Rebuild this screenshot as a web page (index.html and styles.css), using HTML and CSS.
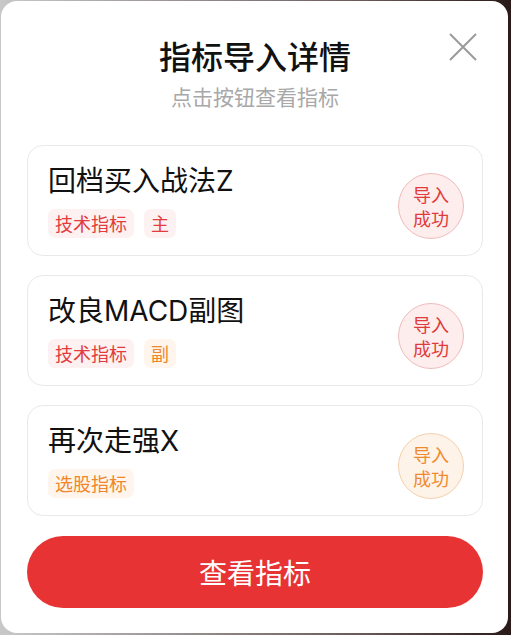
FILE: index.html
```html
<!DOCTYPE html>
<html lang="zh-CN">
<head>
  <meta charset="utf-8">
  <title>指标导入详情</title>
  <link rel="stylesheet" href="styles.css">
</head>
<body>
<div class="modal">
  <div class="close">
    <svg width="28" height="28" viewBox="0 0 28 28">
      <path d="M1 1L27 27M27 1L1 27" stroke="#9a9a9a" stroke-width="2" fill="none"/>
    </svg>
  </div>

  <div class="head">
    <h1 class="title">指标导入详情</h1>
    <p class="sub">点击按钮查看指标</p>
  </div>

  <div class="list">
    <div class="card">
      <div class="info">
        <div class="name">回档买入战法Z</div>
        <div class="tags">
          <span class="tag red">技术指标</span>
          <span class="tag red">主</span>
        </div>
      </div>
      <div class="badge red">导入<br>成功</div>
    </div>

    <div class="card">
      <div class="info">
        <div class="name">改良MACD副图</div>
        <div class="tags">
          <span class="tag red">技术指标</span>
          <span class="tag orange">副</span>
        </div>
      </div>
      <div class="badge red">导入<br>成功</div>
    </div>

    <div class="card">
      <div class="info">
        <div class="name">再次走强X</div>
        <div class="tags">
          <span class="tag orange">选股指标</span>
        </div>
      </div>
      <div class="badge orange">导入<br>成功</div>
    </div>
  </div>

  <div class="btn">查看指标</div>
</div>
</body>
</html>
```

FILE: styles.css
```css
html, body {
    margin: 0;
    height: 100%;
}

body {
    background: linear-gradient(to right, #c8c8c8, #6a5a5a 70%, #2a1a1a);
    padding: 1px 3px 2px 1px;
    box-sizing: border-box;
    font-family: "Noto Sans CJK SC", "Noto Sans", sans-serif;
    color: #111111;
}

.modal {
    position: relative;
    height: 632px;
    background: #ffffff;
    border-radius: 16px;
    padding: 34px 25px 0 26px;
    box-sizing: border-box;
}

.close {
    position: absolute;
    top: 32px;
    right: 31px;
    width: 28px;
    height: 28px;
}

.close svg {
    display: block;
}

.head {
    text-align: center;
}

.title {
    margin: 0;
    font-size: 32px;
    line-height: 40px;
    font-weight: 500;
    color: #111111;
}

.sub {
    margin: 6px 0 0;
    font-size: 21px;
    line-height: 30px;
    color: #a8a8a8;
}

.list {
    margin-top: 34px;
    display: flex;
    flex-direction: column;
    gap: 19px;
}

.card {
    height: 111px;
    box-sizing: border-box;
    border: 1px solid #e9e9e9;
    border-radius: 16px;
    padding: 17px 18px 0 20px;
    display: flex;
    justify-content: space-between;
}

.name {
    font-family: Inter, "Noto Sans CJK SC", sans-serif;
    font-size: 28px;
    line-height: 37px;
    color: #111111;
}

.tags {
    margin-top: 9px;
    display: flex;
    gap: 10px;
}

.tag {
    height: 29px;
    line-height: 29px;
    padding: 0 7px;
    border-radius: 7px;
    font-size: 18px;
}

.tag.red {
    background: #fdf1f1;
    color: #e23c3c;
}

.tag.orange {
    background: #fff5ec;
    color: #f0862a;
}

.badge {
    width: 66px;
    height: 66px;
    box-sizing: border-box;
    margin-top: 10px;
    border-radius: 50%;
    display: flex;
    align-items: center;
    justify-content: center;
    text-align: center;
    font-size: 18px;
    line-height: 24px;
}

.badge.red {
    background: #fdeded;
    border: 1px solid #efbcbc;
    color: #e03a3a;
}

.badge.orange {
    background: #fef3e9;
    border: 1px solid #f5d0ab;
    color: #f08a2e;
}

.btn {
    margin-top: 20px;
    height: 72px;
    border-radius: 36px;
    background: #e73333;
    color: #ffffff;
    font-size: 28px;
    line-height: 72px;
    text-align: center;
}
```
